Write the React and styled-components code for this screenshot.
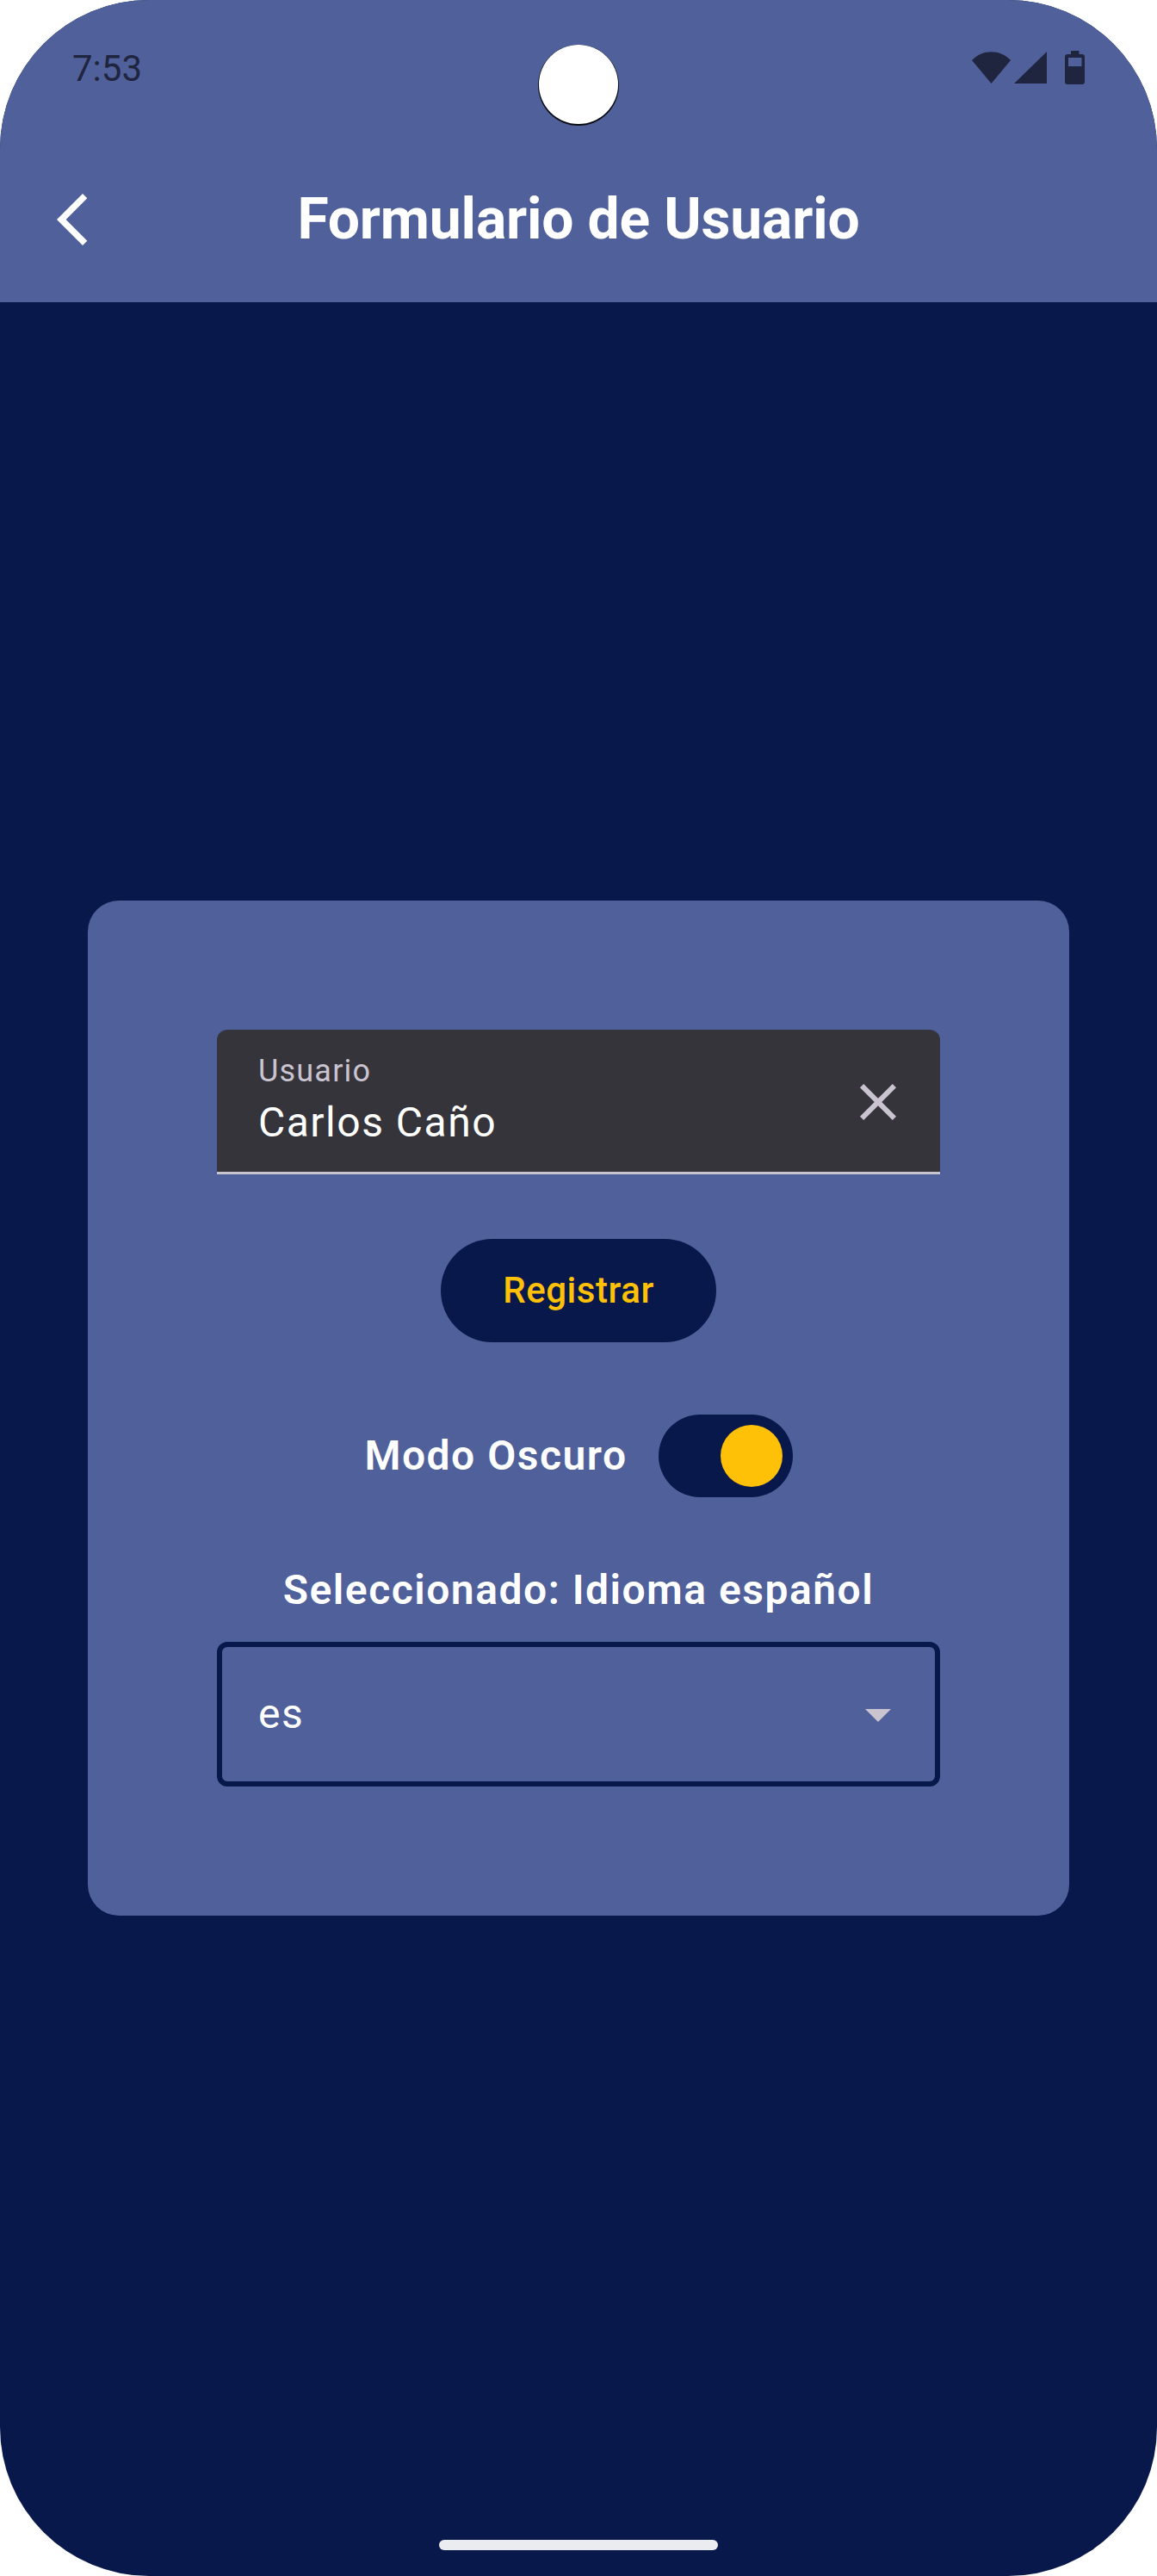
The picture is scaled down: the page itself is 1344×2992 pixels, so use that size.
import React, { useState } from "react";
import styled, { createGlobalStyle } from "styled-components";

const c = {
  panel: "#50609b",
  night: "#08184b",
  status: "#20253f",
  amber: "#ffc107",
  muted: "#cac4d0",
  field: "#36343b",
  home: "#ebecf0",
};

const Global = createGlobalStyle`
  body { margin: 0; background: #fff; }
  * { box-sizing: border-box; }
  button { font: inherit; border: 0; padding: 0; background: none; }
`;

const Screen = styled.div`
  width: 1344px;
  height: 2992px;
  display: flex;
  flex-direction: column;
  position: relative;
  overflow: hidden;
  border-radius: 173px;
  background: ${c.night};
  color: #fff;
  font-family: Roboto, "Noto Sans", sans-serif;
`;

const StatusBar = styled.div`
  height: 159px;
  flex: none;
  display: flex;
  justify-content: space-between;
  align-items: center;
  padding: 0 84px;
  background: ${c.panel};
  color: ${c.status};
`;

const Clock = styled.span`
  font-size: 42px;
  line-height: 48px;
`;

const StatusIcons = styled.div`
  display: flex;
  align-items: center;
  padding-bottom: 2px;
`;

const StatusIcon = styled.svg`
  display: block;
  width: ${(p) => p.$w}px;
  height: 39px;
  margin-left: ${(p) => p.$gap || 0}px;
  fill: currentColor;
`;

const Camera = styled.div`
  position: absolute;
  top: 52px;
  left: 625px;
  width: 94px;
  height: 94px;
  border-radius: 50%;
  background: #0a0c14;

  &::after {
    content: "";
    display: block;
    width: 92px;
    height: 92px;
    margin: 0 1px;
    border-radius: 50%;
    background: #fff;
  }
`;

const AppBar = styled.header`
  height: 192px;
  flex: none;
  display: grid;
  grid-template-columns: 144px 1fr 144px;
  align-items: center;
  padding: 0 12px;
  background: ${c.panel};
`;

const IconButton = styled.button`
  width: 144px;
  height: 144px;
  display: grid;
  place-items: center;
  color: ${(p) => p.$color};
`;

const Glyph = styled.svg`
  display: block;
  width: 72px;
  height: 72px;
  fill: currentColor;
`;

const Title = styled.h1`
  margin: 0;
  text-align: center;
  font-size: 66px;
  line-height: 84px;
  font-weight: 700;
  letter-spacing: -0.18px;
`;

const Content = styled.main`
  flex: 1;
  display: flex;
  flex-direction: column;
  align-items: center;
  padding-top: 695px;
`;

const Card = styled.section`
  width: 1140px;
  height: 1179px;
  padding: 150px;
  border-radius: 36px;
  background: ${c.panel};
  display: flex;
  flex-direction: column;
  align-items: center;
`;

const TextField = styled.div`
  width: 100%;
  height: 168px;
  flex: none;
  display: flex;
  align-items: center;
  justify-content: space-between;
  padding-left: 48px;
  border-radius: 12px 12px 0 0;
  box-shadow: inset 0 -3px ${c.muted};
  background: ${c.field};
`;

const FieldText = styled.div`
  display: flex;
  flex-direction: column;
`;

const FieldLabel = styled.span`
  font-size: 36px;
  line-height: 48px;
  letter-spacing: 1.2px;
  color: ${c.muted};
`;

const FieldValue = styled.span`
  font-size: 48px;
  line-height: 72px;
  letter-spacing: 1.5px;
`;

const SubmitButton = styled.button`
  && {
    width: 320px;
    height: 120px;
    flex: none;
    margin-top: 75px;
    border-radius: 60px;
    background: ${c.night};
    color: ${c.amber};
    font-size: 42px;
    line-height: 60px;
    font-weight: 500;
    letter-spacing: 0.55px;
  }
`;

const SwitchRow = styled.div`
  height: 144px;
  margin-top: 60px;
  flex: none;
  display: flex;
  align-items: center;
  gap: 36px;
`;

const Strong = styled.span`
  font-size: 48px;
  line-height: 72px;
  font-weight: 600;
  letter-spacing: 1.5px;
`;

const Track = styled.button`
  && {
    width: 156px;
    height: 96px;
    display: flex;
    align-items: center;
    justify-content: ${(p) => (p.$on ? "flex-end" : "flex-start")};
    padding: 0 12px;
    border-radius: 48px;
    background: ${c.night};
  }
`;

const Thumb = styled.span`
  width: 72px;
  height: 72px;
  border-radius: 50%;
  background: ${c.amber};
`;

const LanguageBlock = styled.div`
  width: 100%;
  margin-top: 48px;
  display: flex;
  flex-direction: column;
  align-items: center;
  gap: 24px;
`;

const Select = styled.div`
  width: 100%;
  height: 168px;
  display: flex;
  align-items: center;
  justify-content: space-between;
  padding-left: 42px;
  border: 6px solid ${c.night};
  border-radius: 12px;

  ${IconButton} { margin-right: -6px; }
`;

const HomeIndicator = styled.div`
  position: absolute;
  left: 510px;
  bottom: 30px;
  width: 324px;
  height: 12px;
  border-radius: 6px;
  background: ${c.home};
`;

export default function App() {
  const [dark, setDark] = useState(true);
  return (
    <>
      <Global />
      <Screen>
        <StatusBar>
          <Clock>7:53</Clock>
          <StatusIcons>
            <StatusIcon $w={45} viewBox="0 0 45 39">
              <path d="M0 11 C12-2 33-2 45 11 L22.5 38Z" />
            </StatusIcon>
            <StatusIcon $w={38} $gap={4} viewBox="0 0 38 39">
              <path d="M38 1V38H0Z" />
            </StatusIcon>
            <StatusIcon $w={23} $gap={21} viewBox="0 0 23 39">
              <path
                fillRule="evenodd"
                d="M7 0H16.5V4H20Q23 4 23 7V36Q23 39 20 39H3Q0 39 0 36V7Q0 4 3 4H7ZM4 8V18H19.5V8Z"
              />
            </StatusIcon>
          </StatusIcons>
        </StatusBar>
        <AppBar>
          <IconButton $color="#fff" aria-label="Atrás">
            <Glyph viewBox="0 0 24 24">
              <path d="M17.77 3.77 16 2 6 12l10 10 1.77-1.77L9.54 12z" />
            </Glyph>
          </IconButton>
          <Title>Formulario de Usuario</Title>
        </AppBar>
        <Content>
          <Card>
            <TextField>
              <FieldText>
                <FieldLabel>Usuario</FieldLabel>
                <FieldValue>Carlos Caño</FieldValue>
              </FieldText>
              <IconButton $color={c.muted} aria-label="Borrar">
                <Glyph viewBox="0 0 24 24">
                  <path d="M19 6.41 17.59 5 12 10.59 6.41 5 5 6.41 10.59 12 5 17.59 6.41 19 12 13.41 17.59 19 19 17.59 13.41 12z" />
                </Glyph>
              </IconButton>
            </TextField>
            <SubmitButton>Registrar</SubmitButton>
            <SwitchRow>
              <Strong>Modo Oscuro</Strong>
              <Track
                $on={dark}
                role="switch"
                aria-checked={dark}
                onClick={() => setDark(!dark)}
              >
                <Thumb />
              </Track>
            </SwitchRow>
            <LanguageBlock>
              <Strong>Seleccionado: Idioma español</Strong>
              <Select>
                <FieldValue>es</FieldValue>
                <IconButton $color={c.muted} aria-label="Abrir">
                  <Glyph viewBox="0 0 24 24">
                    <path d="M7 10l5 5 5-5z" />
                  </Glyph>
                </IconButton>
              </Select>
            </LanguageBlock>
          </Card>
        </Content>
        <Camera />
        <HomeIndicator />
      </Screen>
    </>
  );
}
